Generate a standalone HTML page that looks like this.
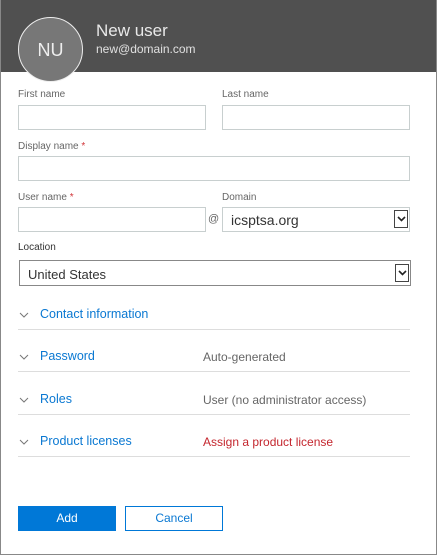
<!DOCTYPE html>
<html><head><style>
*{box-sizing:border-box;margin:0;padding:0}
body{width:437px;height:555px;overflow:hidden;background:#fff;font-family:"Liberation Sans",sans-serif;position:relative}
.frame{position:absolute;left:0;top:0;width:437px;height:555px;border:1px solid #888;border-top:none}
.hdr{position:absolute;left:0;top:0;width:437px;height:72px;background:#505050}
.av{position:absolute;left:18px;top:17px;width:65px;height:65px;border-radius:50%;background:#777;border:1.5px solid #eee;color:#eee;font-size:18px;text-align:center;line-height:64px}
.t1{position:absolute;left:96px;top:21px;color:#e8e8e8;font-size:17px}
.t2{position:absolute;left:96px;top:42px;color:#e0e0e0;font-size:12px}
.lbl{position:absolute;font-size:10px;color:#666}
.lbl b{color:#d13438;font-weight:normal}
.in{position:absolute;height:25px;border:1px solid #c8cfcf;background:#fff}
.sel{position:absolute;border:1px solid #aaa;font-size:14px;color:#333;padding-left:8px}
.arr{position:absolute;right:1px;top:2px;width:14px;height:18px;border:1px solid #444;background:#fff}
.arr svg{position:absolute;left:2px;top:5px}
.row{position:absolute;left:18px;width:392px;height:1px;background:#ddd}
.ac{position:absolute;left:40px;font-size:12.5px;color:#0a78d2}
.rt{position:absolute;left:203px;font-size:12px;color:#666}
.ch{position:absolute;left:19px}
.btn{position:absolute;top:506px;height:25px;font-size:12px;text-align:center;line-height:25px}
</style></head><body>
<div class="hdr"></div>
<div class="frame"></div>
<div class="av">NU</div>
<div class="t1">New user</div>
<div class="t2">new@domain.com</div>

<div class="lbl" style="left:18px;top:89px">First name</div>
<div class="lbl" style="left:222px;top:89px">Last name</div>
<div class="in" style="left:18px;top:105px;width:188px"></div>
<div class="in" style="left:222px;top:105px;width:188px"></div>

<div class="lbl" style="left:18px;top:141px">Display name <b>*</b></div>
<div class="in" style="left:18px;top:156px;width:392px"></div>

<div class="lbl" style="left:18px;top:192px">User name <b>*</b></div>
<div class="lbl" style="left:222px;top:192px">Domain</div>
<div class="in" style="left:18px;top:207px;width:188px"></div>
<div style="position:absolute;left:208px;top:213px;font-size:11px;color:#666">@</div>
<div class="sel" style="left:222px;top:207px;width:188px;height:25px;line-height:24px;border-color:#c8cfcf">icsptsa.org<div class="arr"><svg width="9" height="6" viewBox="0 0 9 6"><path d="M1 1l3.5 3.5L8 1" stroke="#222" stroke-width="1.6" fill="none"/></svg></div></div>

<div class="lbl" style="left:18px;top:242px;color:#333">Location</div>
<div class="sel" style="left:19px;top:260px;width:392px;height:26px;line-height:27px;border-color:#888;font-size:13px">United States<div class="arr" style="top:3px"><svg width="9" height="6" viewBox="0 0 9 6"><path d="M1 1l3.5 3.5L8 1" stroke="#222" stroke-width="1.6" fill="none"/></svg></div></div>

<svg class="ch" style="top:312px" width="10" height="6" viewBox="0 0 10 6"><path d="M1 1l4 4 4-4" stroke="#777" fill="none"/></svg>
<div class="ac" style="top:307px">Contact information</div>
<div class="row" style="top:329px"></div>

<svg class="ch" style="top:354px" width="10" height="6" viewBox="0 0 10 6"><path d="M1 1l4 4 4-4" stroke="#777" fill="none"/></svg>
<div class="ac" style="top:349px">Password</div>
<div class="rt" style="top:350px">Auto-generated</div>
<div class="row" style="top:371px"></div>

<svg class="ch" style="top:397px" width="10" height="6" viewBox="0 0 10 6"><path d="M1 1l4 4 4-4" stroke="#777" fill="none"/></svg>
<div class="ac" style="top:392px">Roles</div>
<div class="rt" style="top:393px">User (no administrator access)</div>
<div class="row" style="top:414px"></div>

<svg class="ch" style="top:439px" width="10" height="6" viewBox="0 0 10 6"><path d="M1 1l4 4 4-4" stroke="#777" fill="none"/></svg>
<div class="ac" style="top:434px">Product licenses</div>
<div class="rt" style="top:435px;color:#c4262e">Assign a product license</div>
<div class="row" style="top:456px"></div>

<div class="btn" style="left:18px;width:98px;background:#0078d7;color:#fff">Add</div>
<div class="btn" style="left:125px;width:98px;border:1px solid #0078d7;color:#0a78d2;line-height:23px">Cancel</div>
</body></html>
